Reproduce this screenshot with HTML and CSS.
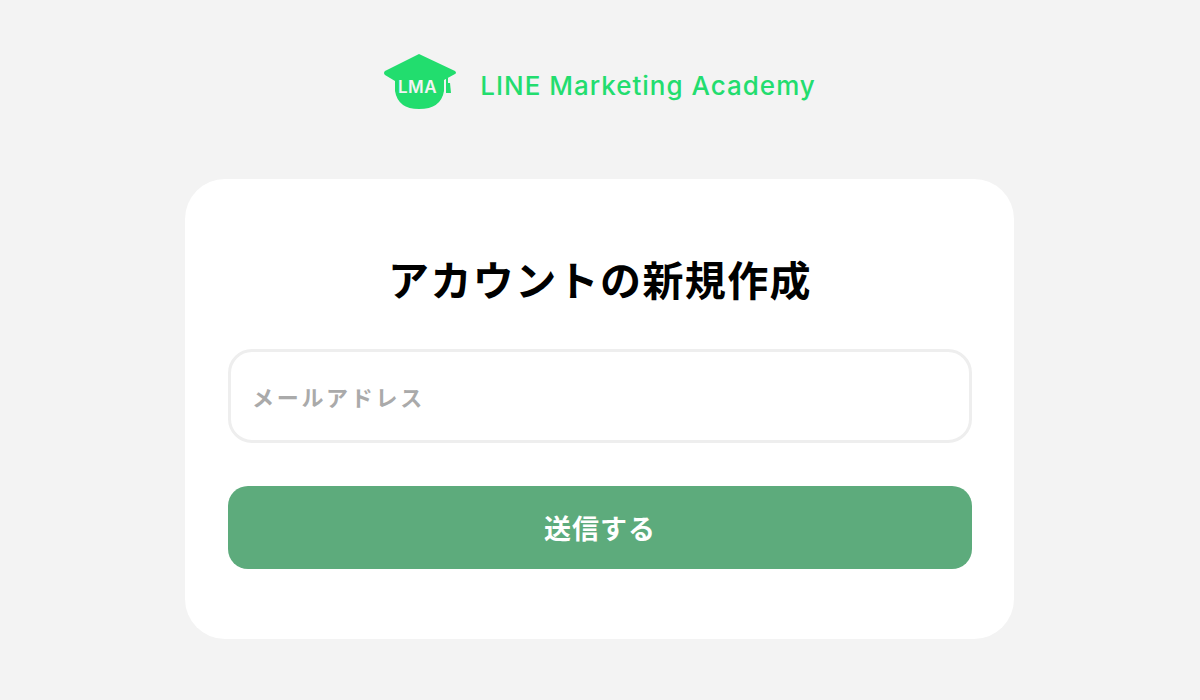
FILE: index.html
```html
<!DOCTYPE html>
<html lang="ja">
<head>
    <meta charset="UTF-8">
    <meta name="viewport" content="width=device-width, initial-scale=1.0">
    <title>アカウントの新規作成</title>
    <link rel="stylesheet" href="styles.css">
</head>
<body>

    <header class="logo">
        <svg class="logo-mark" width="74" height="56" viewBox="0 0 74 56">
            <!-- cap -->
            <path fill="#22dd6e" d="M36 0 L72 17 Q74 19 72 20 L61 26 L61 37 Q58 55 36 55 Q15 55 12 37 L12 27 L2 21 Q0 19 2 17 Z"/>
            <text class="logo-mark-text" x="15" y="39">LMA</text>
            <!-- tassel -->
            <rect x="63" y="24" width="2" height="6" fill="#22dd6e"/>
            <path fill="#22dd6e" d="M63 29 h4 l1 10 h-5 z"/>
        </svg>
        <span class="logo-text">LINE Marketing Academy</span>
    </header>

    <main class="card">
        <h1 class="card-title">アカウントの新規作成</h1>
        <form class="signup-form">
            <input class="email-input" type="text" placeholder="メールアドレス">
            <button class="submit-btn" type="button">送信する</button>
        </form>
    </main>

</body>
</html>
```

FILE: styles.css
```css
* {
    box-sizing: border-box;
}

body {
    margin: 0;
    height: 700px;
    overflow: hidden;
    background: #f3f3f3;
    display: flex;
    flex-direction: column;
    align-items: center;
    padding-top: 54px;
    font-family: "Noto Sans CJK JP", "Noto Sans", sans-serif;
}

.logo {
    display: flex;
    align-items: center;
    gap: 23px;
    height: 56px;
    margin-right: 1px;
}

.logo-mark {
    display: block;
}

.logo-mark-text {
    fill: #f3f3f3;
    font-family: "Inter", sans-serif;
    font-size: 17px;
    font-weight: 600;
    letter-spacing: 0.5px;
}

.logo-text {
    color: #22dd6e;
    font-family: "Inter", sans-serif;
    font-size: 26px;
    font-weight: 500;
    letter-spacing: 1px;
    padding-top: 7px;
}

.card {
    width: 829px;
    height: 460px;
    margin-top: 69px;
    margin-right: 1px;
    padding: 61px 42px 0 43px;
    background: #fff;
    border-radius: 40px;
}

.card-title {
    margin: 0;
    font-size: 41px;
    font-weight: 700;
    letter-spacing: 1.4px;
    line-height: 76px;
    text-align: center;
    color: #000;
}

.signup-form {
    display: flex;
    flex-direction: column;
    gap: 43px;
    margin-top: 33px;
}

.email-input {
    height: 94px;
    padding: 0 21px;
    background: #fff;
    border: 3px solid #eee;
    border-radius: 24px;
    font-family: inherit;
    font-size: 22px;
    font-weight: 700;
    letter-spacing: 2.7px;
    outline: none;
}

.email-input::placeholder {
    color: #aaa;
    opacity: 1;
}

.submit-btn {
    height: 83px;
    background: #5dab7c;
    border: none;
    border-radius: 20px;
    color: #fff;
    font-family: inherit;
    font-size: 27px;
    font-weight: 700;
    letter-spacing: 1px;
}
```
